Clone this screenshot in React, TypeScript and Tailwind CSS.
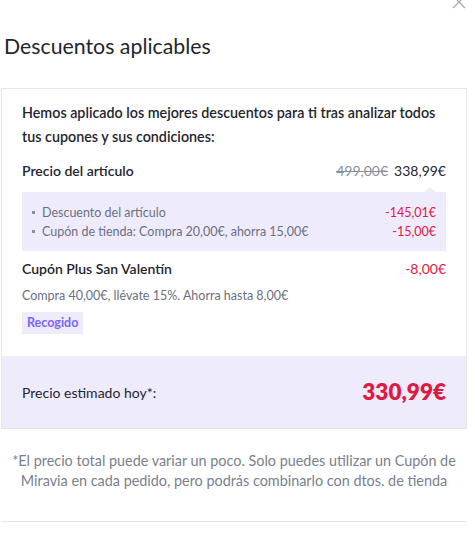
import React from "react";

export default function App() {
  return (
    <div className="w-[475px] h-[552px] bg-white relative overflow-hidden" style={{ fontFamily: "Lato, 'Noto Sans', sans-serif" }}>
      <button className="absolute right-[8px] top-[-6px] text-[#a3a7b3]" aria-label="close">
        <svg width="16" height="16" viewBox="0 0 16 16" fill="none" stroke="currentColor" strokeWidth="1.2">
          <path d="M2 2L14 14M14 2L2 14" />
        </svg>
      </button>
      <div className="w-[466px] ml-px">
        <h1 className="pt-[32px] pl-[3px] text-[21.3px] leading-[28px] text-[#1f2530] font-normal">Descuentos aplicables</h1>
        <div className="mt-[28px] border border-[#e6e6e9]">
          <div className="px-[20px] pt-[12px] pb-[22px]">
            <p className="text-[14.3px] leading-[24px] font-semibold text-[#1f2530]">
              Hemos aplicado los mejores descuentos para ti tras analizar todos tus cupones y sus condiciones:
            </p>
            <div className="mt-[12px] flex items-center justify-between text-[14px] leading-[20px]">
              <span className="font-semibold text-[#1f2530]">Precio del artículo</span>
              <span className="flex items-center gap-[6px]">
                <span className="text-[#8a8f9c] line-through">499,00€</span>
                <span className="text-[#1f2530]">338,99€</span>
              </span>
            </div>
            <div className="relative mt-[11px] bg-[#eeebfd] px-[10px] pt-[11px] pb-[10px]">
              <div className="absolute right-[10px] top-[-5px] w-0 h-0 border-l-[6px] border-r-[6px] border-b-[5px] border-l-transparent border-r-transparent border-b-[#eeebfd]" />
              <div className="flex items-center justify-between text-[12.5px] leading-[19px]">
                <span className="flex items-center text-[#6b7080]">
                  <span className="w-[3px] h-[3px] bg-[#8a8f9c] mr-[7px]" />
                  Descuento del artículo
                </span>
                <span className="text-[#e0193f]">-145,01€</span>
              </div>
              <div className="flex items-center justify-between text-[12.5px] leading-[19px]">
                <span className="flex items-center text-[#6b7080]">
                  <span className="w-[3px] h-[3px] bg-[#8a8f9c] mr-[7px]" />
                  Cupón de tienda: Compra 20,00€, ahorra 15,00€
                </span>
                <span className="text-[#e0193f]">-15,00€</span>
              </div>
            </div>
            <div className="mt-[8px] flex items-center justify-between text-[14px] leading-[20px]">
              <span className="font-semibold text-[#1f2530]">Cupón Plus San Valentín</span>
              <span className="text-[#e0193f]">-8,00€</span>
            </div>
            <p className="mt-[8px] text-[12.5px] leading-[18px] text-[#6b7080]">Compra 40,00€, llévate 15%. Ahorra hasta 8,00€</p>
            <span className="mt-[7px] inline-block bg-[#eeebfd] px-[5px] text-[12.5px] leading-[22px] font-bold text-[#7b61ff]">Recogido</span>
          </div>
          <div className="bg-[#eeebfd] h-[72px] px-[20px] flex items-center justify-between">
            <span className="text-[14px] text-[#1f2530]">Precio estimado hoy*:</span>
            <span className="text-[22.5px] font-extrabold text-[#e0193f]">330,99€</span>
          </div>
        </div>
        <p className="mt-[22px] text-center text-[14.4px] leading-[20px] text-[#7a7f8e] px-[2px]">
          *El precio total puede variar un poco. Solo puedes utilizar un Cupón de Miravia en cada pedido, pero podrás combinarlo con dtos. de tienda
        </p>
        <div className="mt-[30px] h-px bg-[#e8e8ea]" />
      </div>
    </div>
  );
}
